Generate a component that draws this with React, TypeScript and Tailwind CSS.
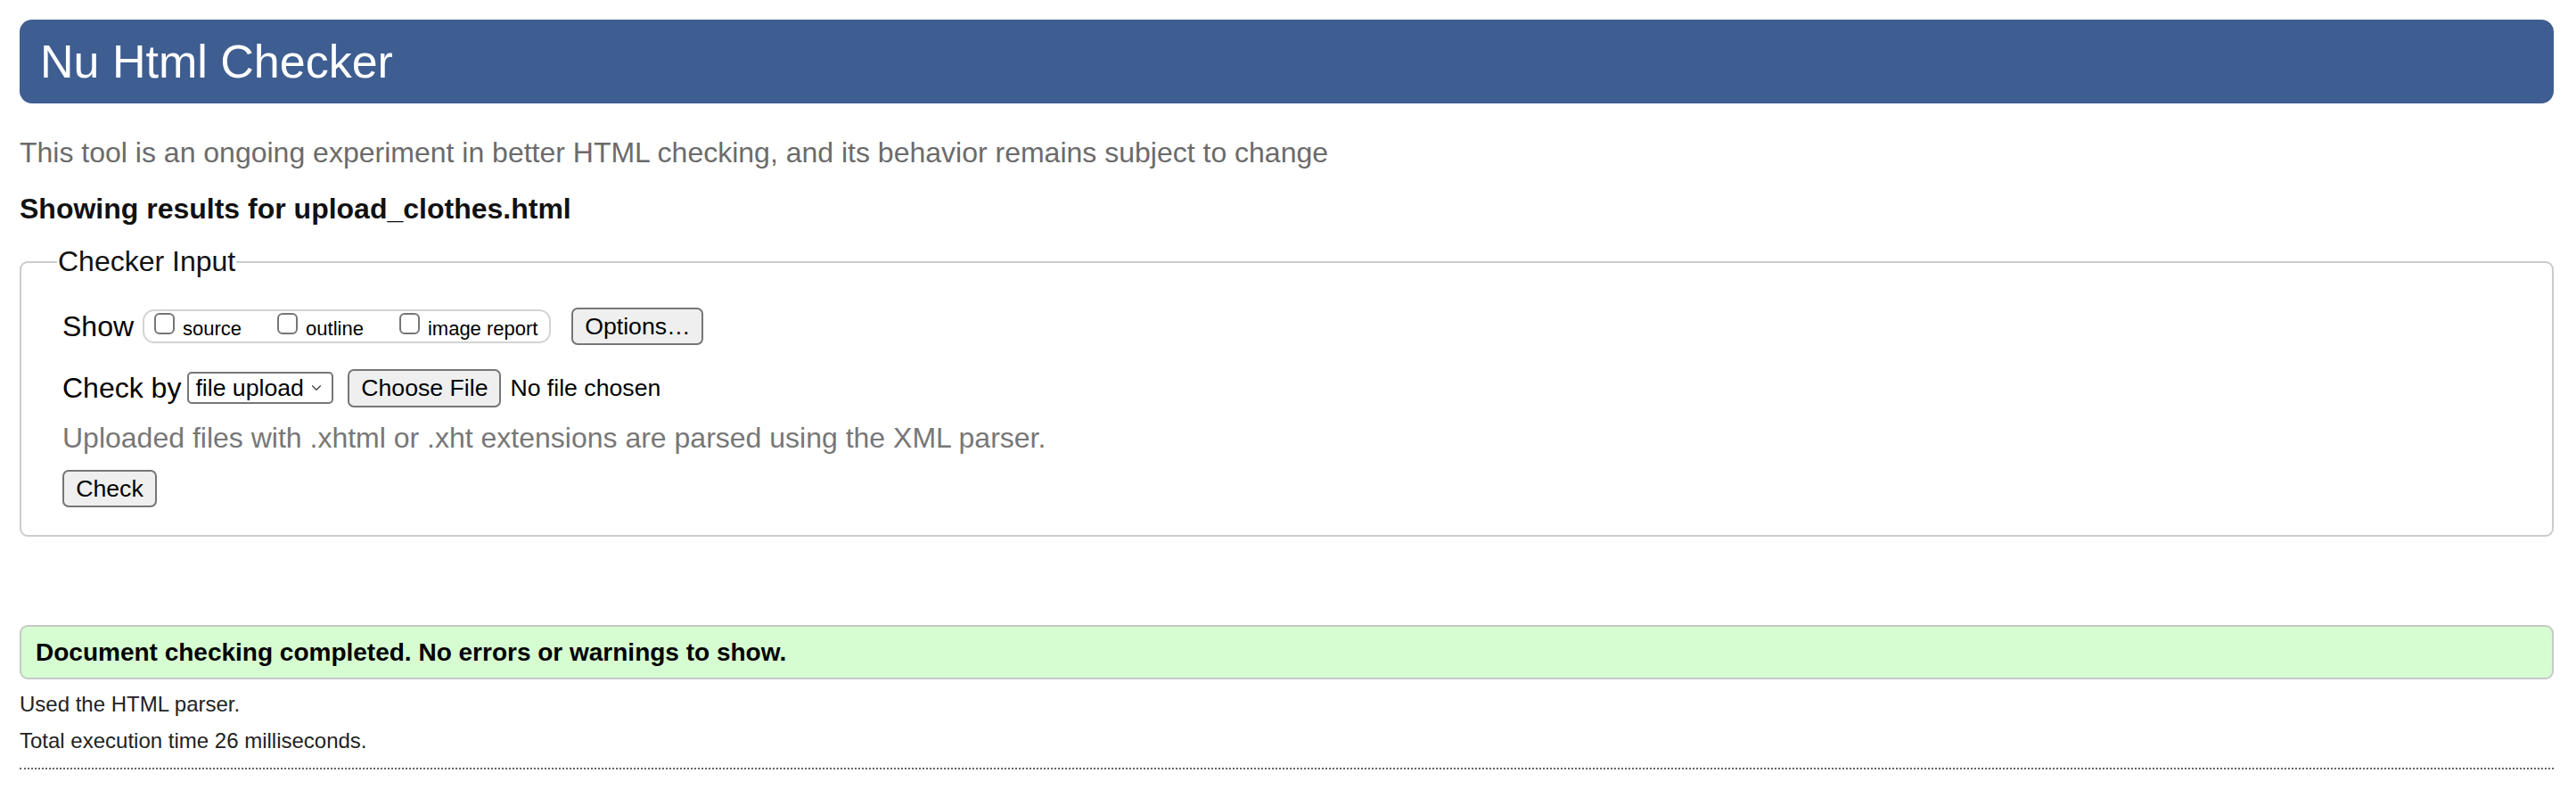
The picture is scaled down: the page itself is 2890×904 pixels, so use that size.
import { ChevronDown } from 'lucide-react';

const btn =
  'h-[42px] px-[12px] whitespace-nowrap border-2 border-[#767676] rounded-[7px] bg-[#efefef] text-[26.67px] leading-none text-black';

function Box({ label, first }: { label: string; first?: boolean }) {
  return (
    <label className={`flex items-start ${first ? '' : 'ml-[40px]'}`}>
      <input
        type="checkbox"
        className="appearance-none w-[23px] h-[24px] mt-[1px] border-2 border-[#767676] rounded-[6px] bg-white"
      />
      <span className="ml-[9px] mt-[6px] text-[22px] leading-[26px] text-black">{label}</span>
    </label>
  );
}

export default function App() {
  return (
    <div className="min-h-screen bg-white pl-[22px] pr-[25px] pt-[22px] font-['Liberation_Sans',Arial,sans-serif] text-black">
      <h1 className="h-[94px] flex items-center pl-[23px] rounded-[14px] bg-[#3e5d91] text-white text-[52px] leading-none font-normal">
        Nu Html Checker
      </h1>

      <p className="mt-[37px] text-[32px] leading-[37px] text-[#6b6b6b]">
        This tool is an ongoing experiment in better HTML checking, and its behavior remains subject to change
      </p>

      <p className="mt-[26px] text-[32px] leading-[37px] font-bold text-[#111]">
        Showing results for upload_clothes.html
      </p>

      <fieldset className="mt-[22px] border-2 border-[#cbcbcb] rounded-[9px] pl-[46px] pr-[24px] pt-0 pb-[31px]">
        <legend className="-ml-[6px] px-[1px] text-[32px] leading-[37px] text-[#111]">Checker Input</legend>

        {/* Show row */}
        <div className="mt-[33px] h-[42px] flex items-center">
          <span className="text-[32px] leading-[37px]">Show</span>
          <div className="ml-[10px] h-[38px] flex items-start pl-[11px] pr-[13px] pt-[1px] border-2 border-[#d4d4d4] rounded-[13px]">
            <Box label="source" first />
            <Box label="outline" />
            <Box label="image report" />
          </div>
          <button className={`${btn} ml-[23px] w-[148px]`}>Options…</button>
        </div>

        {/* Check by row */}
        <div className="mt-[26px] h-[44px] flex items-center">
          <span className="text-[32px] leading-[37px]">Check by</span>
          <div className="ml-[7px] w-[164px] h-[36px] flex items-center justify-between pl-[7px] pr-[8px] border-2 border-[#767676] rounded-[5px] bg-white">
            <span className="text-[26.67px] leading-none">file upload</span>
            <ChevronDown size={18} strokeWidth={1.5} className="text-[#333]" />
          </div>
          <button className={`${btn} ml-[16px] h-[43px] w-[172px]`}>Choose File</button>
          <span className="ml-[10px] text-[26.67px] leading-none">No file chosen</span>
        </div>

        <p className="mt-[16px] text-[32px] leading-[37px] text-[#777]">
          Uploaded files with .xhtml or .xht extensions are parsed using the XML parser.
        </p>

        <button className={`${btn} mt-[17px] h-[41px] w-[106px]`}>Check</button>
      </fieldset>

      <div className="mt-[99px] h-[61px] flex items-center pl-[16px] border-2 border-[#c8c8c8] rounded-[9px] bg-[#d6fcd1]">
        <span className="text-[28px] leading-[32px] font-bold text-black">
          Document checking completed. No errors or warnings to show.
        </span>
      </div>

      <p className="mt-[14px] text-[24px] leading-[28px] text-[#222]">Used the HTML parser.</p>
      <p className="mt-[13px] text-[24px] leading-[28px] text-[#222]">Total execution time 26 milliseconds.</p>

      <hr className="mt-[16px] border-0 border-t-2 border-dotted border-[#666]" />
    </div>
  );
}
